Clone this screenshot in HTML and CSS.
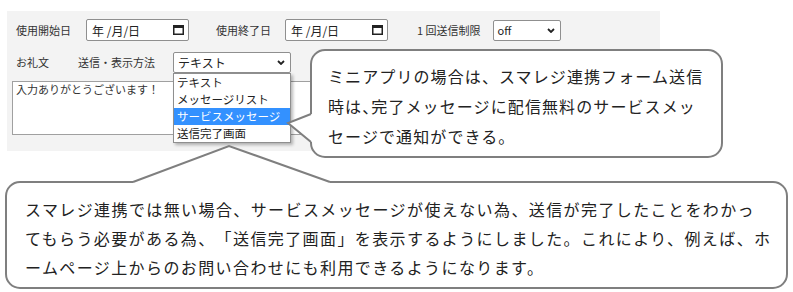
FILE: index.html
```html
<!DOCTYPE html>
<html lang="ja">
<head>
<meta charset="utf-8">
<link rel="stylesheet" href="styles.css">
</head>
<body>
<div class="page">
  <div class="panel">
    <div class="row row1">
      <span class="label">使用開始日</span>
      <div class="date d1"><span>年 /月/日</span>
        <svg class="cal" width="11" height="10" viewBox="0 0 11 10"><rect x="0.75" y="0.75" width="9.5" height="8.5" fill="none" stroke="#222" stroke-width="1.5"/><rect x="0" y="0" width="11" height="3" fill="#222"/></svg>
      </div>
      <span class="label l2">使用終了日</span>
      <div class="date d2"><span>年 /月/日</span>
        <svg class="cal" width="11" height="10" viewBox="0 0 11 10"><rect x="0.75" y="0.75" width="9.5" height="8.5" fill="none" stroke="#222" stroke-width="1.5"/><rect x="0" y="0" width="11" height="3" fill="#222"/></svg>
      </div>
      <span class="label l3">1 回送信制限</span>
      <div class="select sel-off"><span>off</span>
        <svg class="chev" width="8" height="5" viewBox="0 0 8 5"><path d="M1 1 L4 4 L7 1" fill="none" stroke="#222" stroke-width="1.8"/></svg>
      </div>
    </div>
    <div class="row row2">
      <span class="label">お礼文</span>
      <span class="label l4">送信・表示方法</span>
      <div class="select sel-method"><span>テキスト</span>
        <svg class="chev" width="8" height="5" viewBox="0 0 8 5"><path d="M1 1 L4 4 L7 1" fill="none" stroke="#222" stroke-width="1.8"/></svg>
        <ul class="dropdown">
          <li>テキスト</li>
          <li>メッセージリスト</li>
          <li class="active">サービスメッセージ</li>
          <li>送信完了画面</li>
        </ul>
      </div>
    </div>
    <div class="textarea">入力ありがとうございます！</div>
  </div>

  <div class="bubble b1">
    <svg class="tail tail1" width="32" height="38" viewBox="0 0 32 38"><polygon points="24,4 2,13 24,32 30,32 30,4" fill="#fff"/><polyline points="25,4 2,13 25,32" fill="none" stroke="#7f7f7f" stroke-width="2" stroke-linejoin="miter"/></svg>
    <span class="line">ミニアプリの場合は、スマレジ連携フォーム送信</span>
    <span class="line">時は<span class="halt">、</span>完了メッセージに配信無料のサービスメッ</span>
    <span class="line">セージで通知ができる。</span>
  </div>

  <div class="bubble b2">
    <svg class="tail tail2" width="208" height="44" viewBox="0 0 208 44"><polygon points="5,38 101,2 202,38 202,43 5,43" fill="#fff"/><polyline points="5,38 101,2 202,38" fill="none" stroke="#7f7f7f" stroke-width="2"/></svg>
    <span class="line">スマレジ連携では無い場合、サービスメッセージが使えない為、送信が完了したことをわかっ</span>
    <span class="line">てもらう必要がある為、「送信完了画面」を表示するようにしました。これにより、例えば、ホ</span>
    <span class="line">ームページ上からのお問い合わせにも利用できるようになります。</span>
  </div>
</div>
</body>
</html>
```
FILE: styles.css
```css
* { box-sizing: border-box; }
html, body { margin: 0; padding: 0; background: #fff; }
.page {
  position: relative;
  width: 793px;
  height: 292px;
  overflow: hidden;
  font-family: "Noto Sans CJK JP", "Noto Sans", sans-serif;
}
.panel {
  margin: 11px 0 0 7px;
  width: 653px;
  height: 140px;
  background: #f3f3f3;
  padding: 8px 0 0 5px;
}
.row {
  display: flex;
  align-items: center;
  padding-left: 4px;
  font-size: 11px;
  color: #333;
}
.row1 { height: 22px; }
.row2 { height: 21px; margin-top: 11px; }
.label { white-space: nowrap; line-height: 1; }
.l2 { margin-left: 27px; }
.l3 { margin-left: 29px; }
.l4 { margin-left: 29px; }
.date {
  display: flex;
  align-items: center;
  justify-content: space-between;
  width: 103px;
  height: 22px;
  border: 1px solid #8f8f8f;
  border-radius: 2px;
  background: #fff;
  padding: 0 4px 0 5px;
  color: #222;
  font-size: 12px;
}
.d1 { margin-left: 15px; }
.d2 { margin-left: 14px; }
.select {
  position: relative;
  display: flex;
  align-items: center;
  justify-content: space-between;
  height: 21px;
  border: 1px solid #8f8f8f;
  border-radius: 2px;
  background: #fff;
  padding: 0 5px 0 4px;
  color: #222;
  font-size: 11px;
}
.sel-off { width: 68px; margin-left: 12px; }
.sel-method { width: 118px; margin-left: 18px; font-size: 12px; }
.dropdown {
  position: absolute;
  left: -1px;
  top: 20px;
  width: 118px;
  margin: 0;
  padding: 0;
  list-style: none;
  background: #fff;
  border: 1px solid #8f8f8f;
  box-shadow: 2px 2px 3px rgba(0,0,0,0.28);
  z-index: 2;
}
.dropdown li {
  height: 17px;
  line-height: 17px;
  padding-left: 3px;
  font-size: 11.5px;
  color: #222;
  white-space: nowrap;
}
.dropdown li.active { background: #3391ff; color: #fff; }
.textarea {
  margin-top: 8px;
  width: 320px;
  height: 54px;
  border: 1px solid #a0a0a0;
  background: #fff;
  padding: 2px 3px 0;
  font-size: 11px;
  line-height: 11px;
  color: #333;
}
.bubble {
  position: absolute;
  background: #fff;
  border: 2px solid #7f7f7f;
  border-radius: 15px;
  color: #222;
  font-size: 16px;
  text-spacing-trim: space-all;
  z-index: 3;
}
.bubble .line { display: block; white-space: nowrap; }
.halt { font-feature-settings: "halt"; }
.b1 {
  left: 310px;
  top: 49px;
  width: 413px;
  height: 109px;
  padding: 10px 0 0 16px;
  line-height: 30px;
  letter-spacing: 1.1px;
}
.b2 {
  left: 5px;
  top: 181px;
  width: 783px;
  height: 108px;
  padding: 12px 0 0 18px;
  line-height: 29px;
  letter-spacing: 1.4px;
}
.tail { position: absolute; overflow: visible; }
.tail1 { left: -26px; top: 59px; }
.tail2 { left: 121px; top: -39px; }
```
